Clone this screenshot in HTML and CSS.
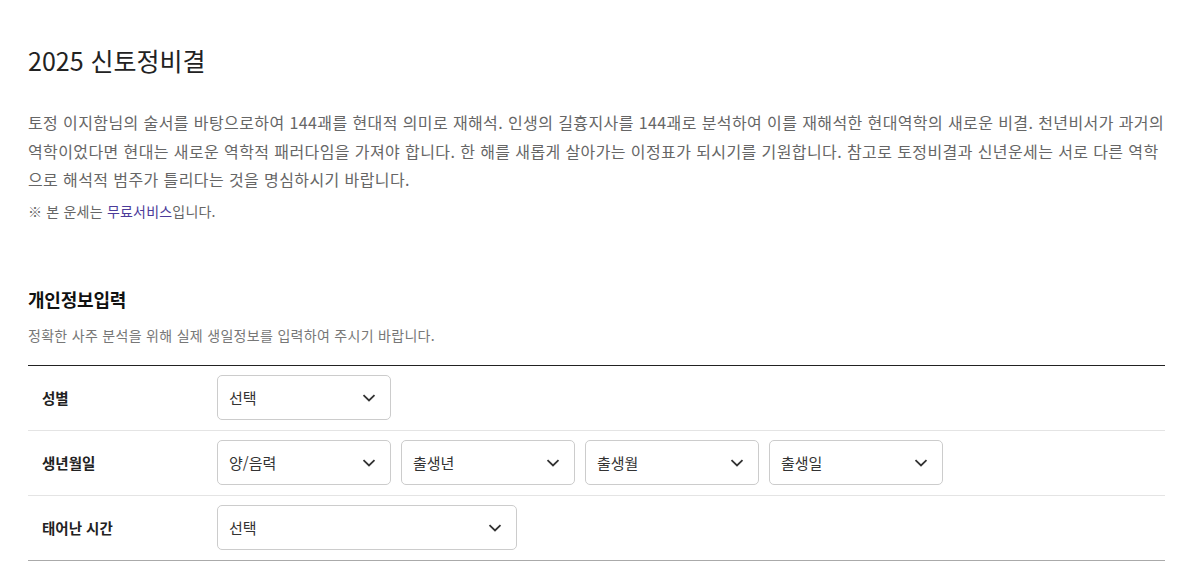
FILE: index.html
```html
<!DOCTYPE html>
<html lang="ko">
  <head>
    <meta charset="utf-8" />
    <meta name="viewport" content="width=device-width, initial-scale=1" />
    <title>2025 신토정비결</title>
    <link rel="stylesheet" href="styles.css">
  </head>
  <body>
    <div class="container">
      <h1 class="title">2025 신토정비결</h1>
      <p class="intro">토정 이지함님의 술서를 바탕으로하여 144괘를 현대적 의미로 재해석. 인생의 길흉지사를 144괘로 분석하여 이를 재해석한 현대역학의 새로운 비결. 천년비서가 과거의<br>역학이었다면 현대는 새로운 역학적 패러다임을 가져야 합니다. 한 해를 새롭게 살아가는 이정표가 되시기를 기원합니다. 참고로 토정비결과 신년운세는 서로 다른 역학<br>으로 해석적 범주가 틀리다는 것을 명심하시기 바랍니다.</p>
      <p class="note">※ 본 운세는 <span class="free">무료서비스</span>입니다.</p>

      <h2 class="section-title">개인정보입력</h2>
      <p class="section-desc">정확한 사주 분석을 위해 실제 생일정보를 입력하여 주시기 바랍니다.</p>

      <!-- 입력 테이블 -->
      <div class="form-table">
        <div class="form-row">
          <div class="form-label">성별</div>
          <div class="form-fields">
            <div class="select">
              <span>선택</span>
              <svg width="14" height="8" viewBox="0 0 14 8"><path d="M1.5 1.2 7 6.5l5.5-5.3" fill="none" stroke="#333" stroke-width="1.8"/></svg>
            </div>
          </div>
        </div>
        <div class="form-row">
          <div class="form-label">생년월일</div>
          <div class="form-fields">
            <div class="select">
              <span>양/음력</span>
              <svg width="14" height="8" viewBox="0 0 14 8"><path d="M1.5 1.2 7 6.5l5.5-5.3" fill="none" stroke="#333" stroke-width="1.8"/></svg>
            </div>
            <div class="select">
              <span>출생년</span>
              <svg width="14" height="8" viewBox="0 0 14 8"><path d="M1.5 1.2 7 6.5l5.5-5.3" fill="none" stroke="#333" stroke-width="1.8"/></svg>
            </div>
            <div class="select">
              <span>출생월</span>
              <svg width="14" height="8" viewBox="0 0 14 8"><path d="M1.5 1.2 7 6.5l5.5-5.3" fill="none" stroke="#333" stroke-width="1.8"/></svg>
            </div>
            <div class="select">
              <span>출생일</span>
              <svg width="14" height="8" viewBox="0 0 14 8"><path d="M1.5 1.2 7 6.5l5.5-5.3" fill="none" stroke="#333" stroke-width="1.8"/></svg>
            </div>
          </div>
        </div>
        <div class="form-row">
          <div class="form-label">태어난 시간</div>
          <div class="form-fields">
            <div class="select wide">
              <span>선택</span>
              <svg width="14" height="8" viewBox="0 0 14 8"><path d="M1.5 1.2 7 6.5l5.5-5.3" fill="none" stroke="#333" stroke-width="1.8"/></svg>
            </div>
          </div>
        </div>
      </div>
    </div>
  </body>
</html>
```

FILE: styles.css
```css
body {
  margin: 0;
  background: #fff;
  font-family: "Noto Sans CJK KR", "Noto Sans", sans-serif;
  color: #222;
}

.container {
  width: 1137px;
  padding: 39px 0 0 28px;
}

.title {
  margin: 0;
  font-size: 25px;
  font-weight: 400;
  line-height: 42px;
  color: #222;
}

.intro {
  margin: 27px 0 0;
  font-size: 16px;
  line-height: 28.5px;
  color: #666;
  letter-spacing: 0.4px;
  white-space: nowrap;
}

.note {
  margin: 6px 0 0;
  font-size: 14px;
  line-height: 22px;
  color: #666;
  letter-spacing: 0.2px;
}

.free {
  color: #4b3b9a;
}

.section-title {
  margin: 64px 0 0;
  font-size: 18px;
  font-weight: 700;
  line-height: 26px;
  color: #111;
  letter-spacing: -0.2px;
}

.section-desc {
  margin: 13px 0 0;
  font-size: 14px;
  line-height: 20px;
  color: #777;
  letter-spacing: 0.3px;
}

.form-table {
  margin-top: 20px;
  border-top: 1px solid #222;
  border-bottom: 1px solid #aaa;
}

.form-row {
  display: flex;
  align-items: center;
  height: 64px;
  border-top: 1px solid #e4e4e4;
}

.form-row:first-child {
  border-top: none;
}

.form-label {
  width: 175px;
  padding-left: 14px;
  font-size: 14.5px;
  font-weight: 700;
  color: #222;
}

.form-fields {
  display: flex;
  gap: 10px;
}

.select {
  display: flex;
  align-items: center;
  justify-content: space-between;
  box-sizing: border-box;
  width: 174px;
  height: 45px;
  padding: 0 14px 0 11px;
  border: 1px solid #ccc;
  border-radius: 5px;
  font-size: 15px;
  color: #333;
}

.select.wide {
  width: 300px;
}
```
